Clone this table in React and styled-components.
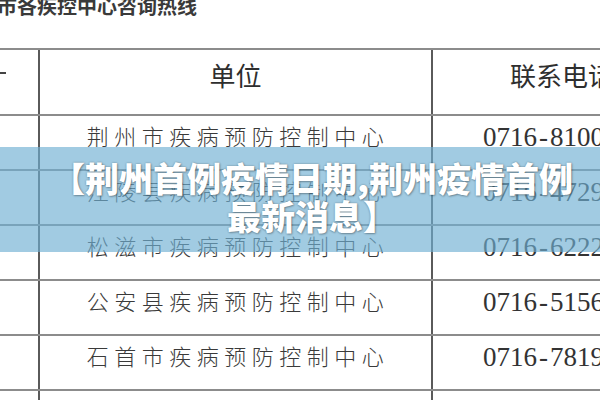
import React from "react";
import styled, { createGlobalStyle } from "styled-components";

const GlobalStyle = createGlobalStyle`
  html, body { margin: 0; padding: 0; background: #ffffff; }
  body { font-family: "Noto Sans CJK SC", "Noto Sans", sans-serif; }
`;

const Page = styled.div`
  position: relative;
  width: 600px;
  height: 400px;
  overflow: hidden;
  background: #ffffff;
`;

const DocTitle = styled.div`
  margin: -4px 0 0 -3px;
  font-family: "Noto Sans CJK SC", sans-serif;
  font-size: 20px;
  line-height: 20px;
  font-weight: 700;
  color: #3a3a3a;
  white-space: nowrap;
`;

const Table = styled.div`
  margin-top: 32px;
  margin-left: -60px;
  width: 760px;
  border-top: 2px solid #8c8c8c;
`;

const Row = styled.div`
  display: grid;
  grid-template-columns: 100px 393px 1fr;
  height: ${(p) => (p.$head ? 66 : 55)}px;
  box-sizing: border-box;
  border-bottom: 2px solid #8c8c8c;
`;

const Cell = styled.div`
  box-sizing: border-box;
  border-right: 2px solid #5a5a5a;
  overflow: hidden;
  white-space: nowrap;
`;

const IndexCell = styled(Cell)`
  display: flex;
  justify-content: flex-end;
  padding: 0 32px 0 0;
`;

const IndexTick = styled.span`
  width: 8px;
  height: 2px;
  margin-top: 22px;
  background: #444;
`;

const HeadLabel = styled(Cell)`
  font-family: "Noto Sans CJK SC", sans-serif;
  font-size: 26px;
  line-height: 26px;
  color: #2e2e2e;
  padding-top: 12px;
  text-align: ${(p) => (p.$left ? "left" : "center")};
  padding-left: ${(p) => (p.$left ? "77px" : "0")};
`;

const UnitName = styled(Cell)`
  font-family: "Noto Sans CJK SC", sans-serif;
  font-weight: 300;
  font-size: 22px;
  line-height: 22px;
  letter-spacing: 5.5px;
  color: #3a3a3a;
  text-align: center;
  padding: 8px 0 0 5px;
`;

const Phone = styled(Cell)`
  font-family: "Liberation Serif", "Times New Roman", serif;
  font-size: 27px;
  line-height: 27px;
  color: #333;
  padding: 8px 0 0 50px;
`;

const Dash = styled.span`
  margin: 0 2px;
`;

const Banner = styled.div`
  position: absolute;
  left: 0;
  right: 0;
  top: 147px;
  height: 105px;
  background: rgba(110, 175, 210, 0.65);
  display: flex;
  align-items: center;
  justify-content: center;
  padding: 0 20px 5px 44px;
  box-sizing: border-box;
`;

const Headline = styled.h1`
  margin: 0;
  font-family: "Noto Sans CJK SC", sans-serif;
  font-weight: 900;
  font-size: 34px;
  line-height: 38px;
  color: #ffffff;
  text-align: center;
  text-shadow: 0 0 2px rgba(0, 0, 0, 0.35), 1px 1px 2px rgba(0, 0, 0, 0.25);
`;

const rows = [
  ["荆州市疾病预防控制中心", "0716", "8100000"],
  ["江陵县疾病预防控制中心", "0716", "4729000"],
  ["松滋市疾病预防控制中心", "0716", "6222000"],
  ["公安县疾病预防控制中心", "0716", "5156000"],
  ["石首市疾病预防控制中心", "0716", "7819000"],
  ["监利县疾病预防控制中心", "0716", "3000000"],
];

export default function App() {
  return (
    <Page>
      <GlobalStyle />
      <DocTitle>市各疾控中心咨询热线</DocTitle>
      <Table>
        <Row $head>
          <IndexCell>
            <IndexTick />
          </IndexCell>
          <HeadLabel>单位</HeadLabel>
          <HeadLabel $left>联系电话</HeadLabel>
        </Row>
        {rows.map(([name, area, num], i) => (
          <Row key={i}>
            <IndexCell />
            <UnitName>{name}</UnitName>
            <Phone>
              {area}
              <Dash>-</Dash>
              {num}
            </Phone>
          </Row>
        ))}
      </Table>
      <Banner>
        <Headline>【荆州首例疫情日期,荆州疫情首例最新消息】</Headline>
      </Banner>
    </Page>
  );
}
